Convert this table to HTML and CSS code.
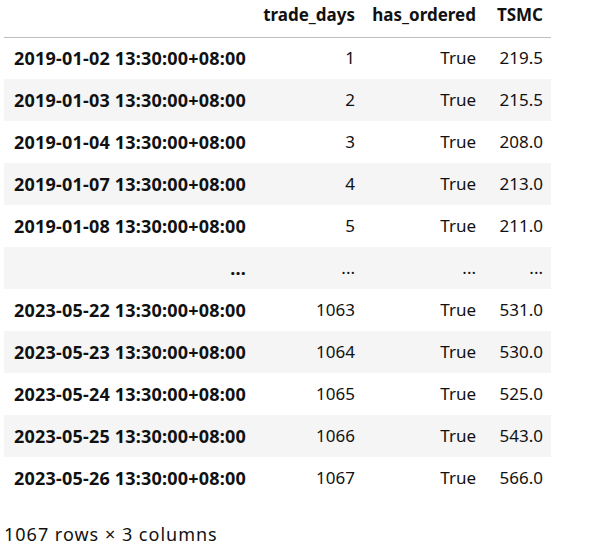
FILE: index.html
```html
<!DOCTYPE html>
<html>
<head>
<meta charset="utf-8">
<link rel="stylesheet" href="styles.css">
</head>
<body>
<div class="output">
<table class="dataframe">
  <thead>
    <tr><th class="c-idx"></th><th class="c-td">trade_days</th><th class="c-ho">has_ordered</th><th class="c-ts">TSMC</th></tr>
  </thead>
  <tbody>
    <tr><th>2019-01-02 13:30:00+08:00</th><td>1</td><td>True</td><td>219.5</td></tr>
    <tr><th>2019-01-03 13:30:00+08:00</th><td>2</td><td>True</td><td>215.5</td></tr>
    <tr><th>2019-01-04 13:30:00+08:00</th><td>3</td><td>True</td><td>208.0</td></tr>
    <tr><th>2019-01-07 13:30:00+08:00</th><td>4</td><td>True</td><td>213.0</td></tr>
    <tr><th>2019-01-08 13:30:00+08:00</th><td>5</td><td>True</td><td>211.0</td></tr>
    <tr><th>...</th><td>...</td><td>...</td><td>...</td></tr>
    <tr><th>2023-05-22 13:30:00+08:00</th><td>1063</td><td>True</td><td>531.0</td></tr>
    <tr><th>2023-05-23 13:30:00+08:00</th><td>1064</td><td>True</td><td>530.0</td></tr>
    <tr><th>2023-05-24 13:30:00+08:00</th><td>1065</td><td>True</td><td>525.0</td></tr>
    <tr><th>2023-05-25 13:30:00+08:00</th><td>1066</td><td>True</td><td>543.0</td></tr>
    <tr><th>2023-05-26 13:30:00+08:00</th><td>1067</td><td>True</td><td>566.0</td></tr>
  </tbody>
</table>
<p class="shape">1067 rows × 3 columns</p>
</div>
</body>
</html>
```
FILE: styles.css
```css
html, body {
  margin: 0;
  padding: 0;
  background: #fff;
}
.output {
  padding: 0 0 0 4px;
  font-family: "Noto Sans", "Open Sans", sans-serif;
  font-size: 17px;
  color: #111;
}
.dataframe {
  border-collapse: collapse;
  table-layout: fixed;
  width: 547px;
}
.dataframe th, .dataframe td {
  padding: 0 8px;
  text-align: right;
  white-space: nowrap;
  line-height: 22px;
}
.dataframe thead th {
  height: 37px;
  vertical-align: top;
  padding-top: 4px;
  box-sizing: border-box;
  font-weight: bold;
  border-bottom: 1px solid #bdbdbd;
}
.dataframe tbody th, .dataframe tbody td {
  height: 42px;
  box-sizing: border-box;
  vertical-align: middle;
}
.dataframe tbody th {
  font-weight: bold;
  font-size: 18px;
  letter-spacing: 0.2px;
}
.dataframe tbody tr:nth-child(even) {
  background: #f5f5f5;
}
.c-idx { width: 250px; }
.c-td { width: 109px; }
.c-ho { width: 121px; }
.c-ts { width: 67px; }
.shape {
  margin: 24px 0 0 0;
  line-height: 22px;
  font-size: 18px;
  letter-spacing: 1px;
}
```
